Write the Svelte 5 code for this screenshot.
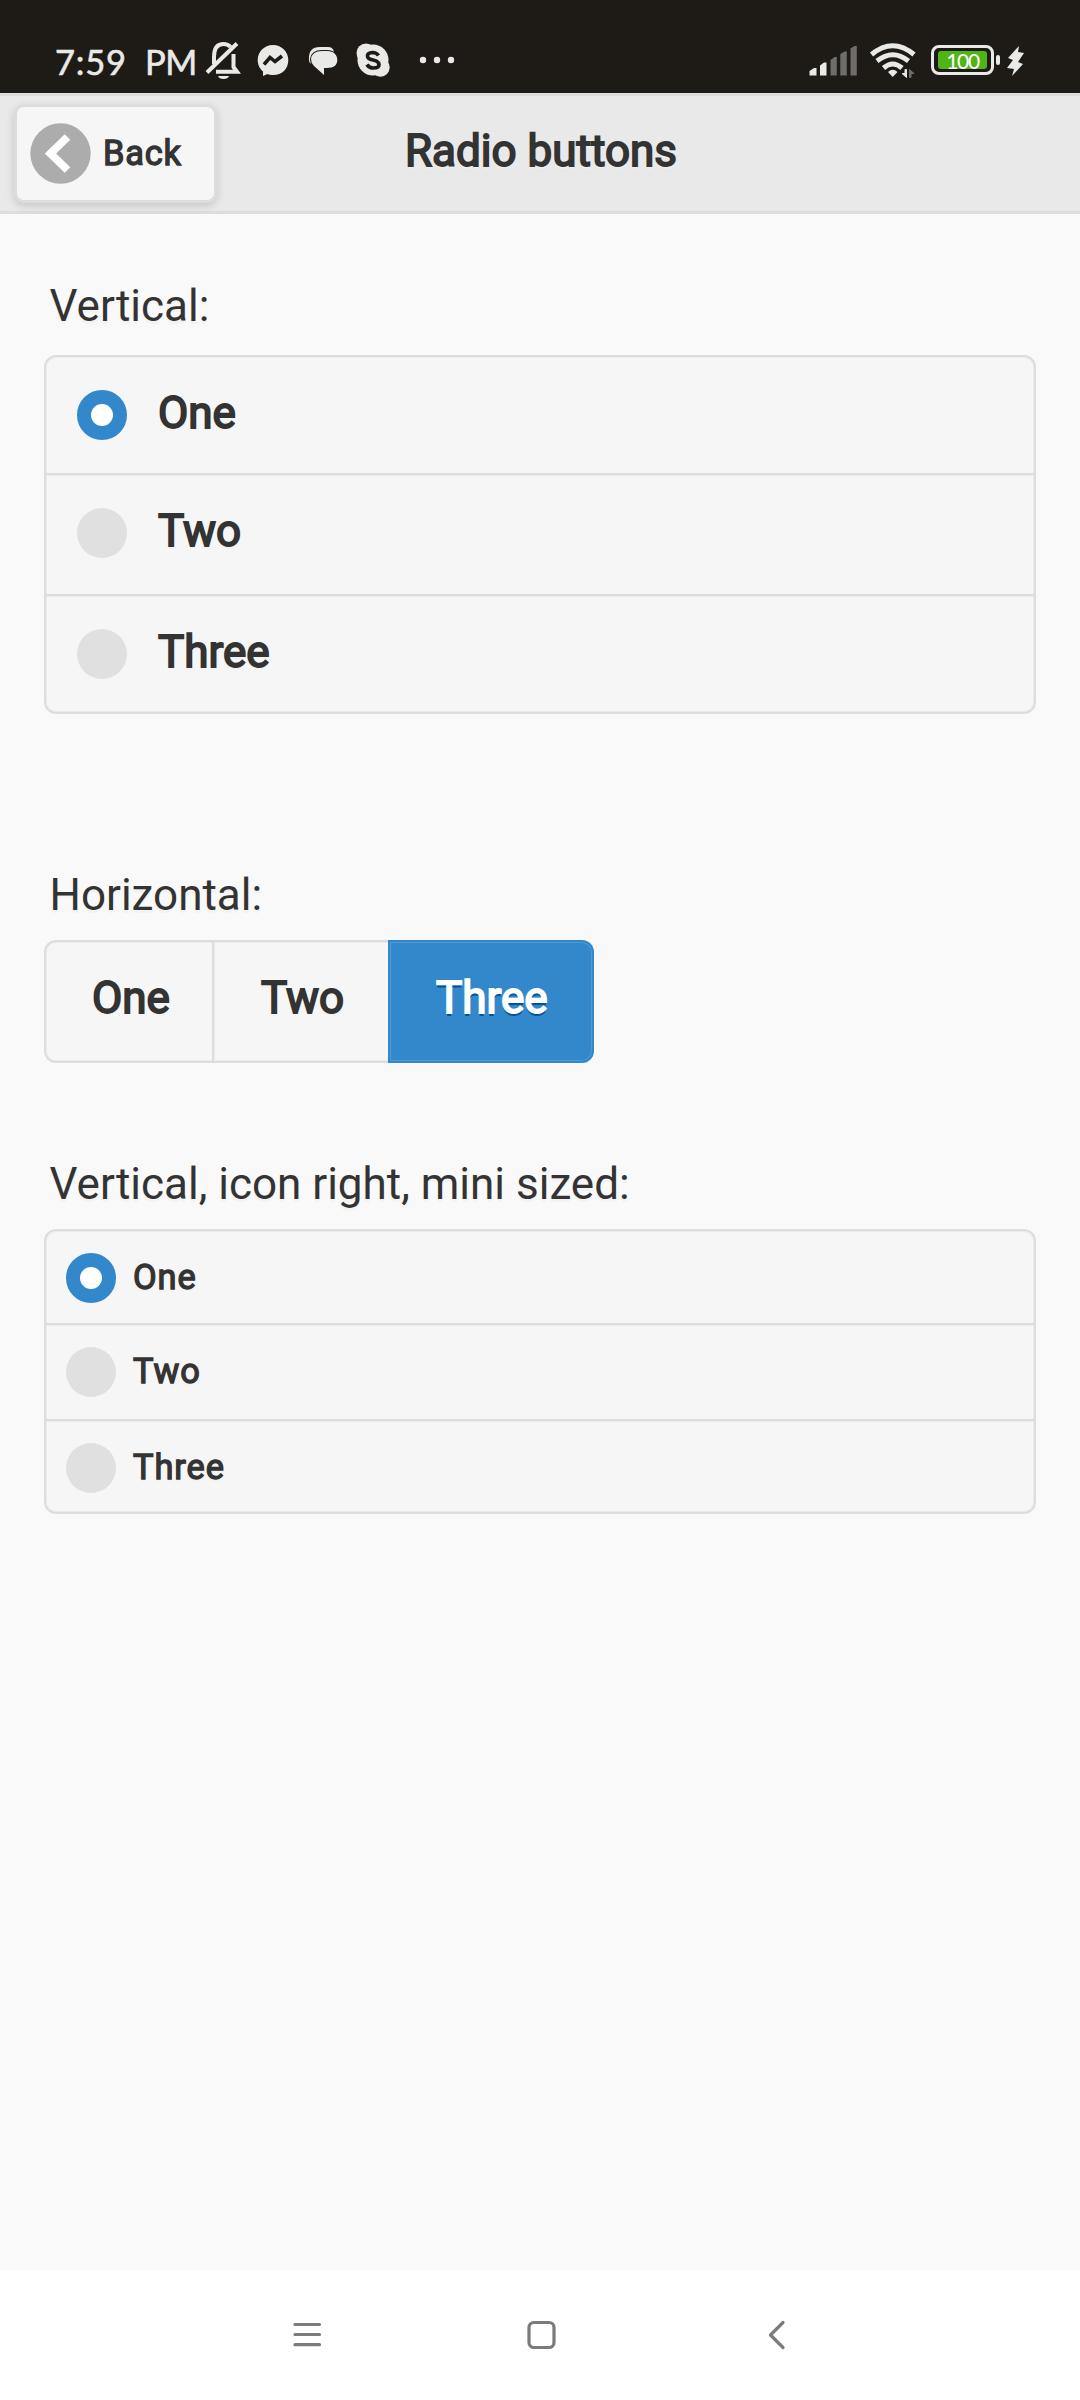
<script>
  const options = ['One', 'Two', 'Three'];
  let vertical = $state('One');
  let horizontal = $state('Three');
  let mini = $state('One');
</script>

<div class="screen">
  <div class="status">
    <div class="clock"><span class="time">7:59</span><span class="pm">PM</span></div>
    <svg class="left-icons" width="256" height="44" viewBox="204 38 256 44">
      <g fill="none" stroke="#e9e9e7" stroke-width="4">
        <path d="M214 64V57Q214 44 223.500 44Q228 44 230.500 47" />
        <path d="M207 72.500L237 43.500" />
        <path d="M216 71.700H237L233.500 67V54" />
      </g>
      <path d="M218 76H229Q228 79 223.500 79Q219 79 218 76Z" fill="#e9e9e7" />
      <path d="M273 45C282 45 288.300 52 288.300 60C288.300 69 282 75 273 75C271 75 269 74.600 267.500 74L263 76V71.500C260 69 257.700 65 257.700 60C257.700 52 264 45 273 45Z" fill="#e9e9e7" />
      <path d="M264 64.500L270 57.500L275 61.500L282 56" fill="none" stroke="#1e1b17" stroke-width="3.500" />
      <path d="M309 60Q308 47 320 47H328Q333 47 334 52L320 60L312 64Q309 63 309 60Z" fill="#e9e9e7" />
      <path d="M322 51H327C334 51 337.300 55 337.300 60C337.300 65 334 68 327 68H324V75L314 66Q311 63 311 59Q312 51 322 51Z" fill="#e9e9e7" stroke="#1e1b17" stroke-width="2" paint-order="stroke" />
      <g fill="#e9e9e7"><circle cx="373" cy="60" r="15.500" /><circle cx="366" cy="53" r="9.500" /><circle cx="380.500" cy="67.500" r="9.200" /></g>
      <path d="M378.500 55.500Q376.500 52.500 372.500 52.500Q367.500 52.700 367.500 56Q367.500 59 373 60Q379 61.300 379 64.500Q379 68 373.500 68Q369 68 367 64.500" fill="none" stroke="#1e1b17" stroke-width="3.700" />
      <g fill="#e9e9e7"><circle cx="423" cy="60" r="3.200" /><circle cx="437" cy="60" r="3.200" /><circle cx="451" cy="60" r="3.200" /></g>
    </svg>
    <div class="right-icons">
      <svg width="110" height="44" viewBox="806 38 110 44">
        <g fill="#e9e9e7">
          <path d="M809.500 71L814 68H816.500V75.500H809.500Z" /><path d="M820 65.500L824 62.500H826.500V75.500H820Z" />
        </g>
        <g fill="#6f6d69">
          <path d="M830.500 60L834.500 57H836.800V75.500H830.500Z" /><path d="M840.300 54L844.500 51.500H846.800V75.500H840.300Z" /><path d="M850.500 48.500L854.500 46H856.800V75.500H850.500Z" />
        </g>
        <g fill="none" stroke="#e9e9e7" stroke-width="5">
          <path d="M871.500 54.500Q892.700 37 914 54.500" /><path d="M877 61Q892.700 48.500 908.500 61" /><path d="M883.500 68Q892.700 60 902 68" />
        </g>
        <path d="M888 72Q892.700 67.500 897.500 72L892.700 77Z" fill="#e9e9e7" />
        <path d="M906.500 69.500V77.500L902 73.500H905V69.500Z" fill="#e9e9e7" stroke="#e9e9e7" />
        <path d="M909.500 77.500V69.500L914 73.500H911V77.500Z" fill="#6f6d69" stroke="#6f6d69" />
      </svg>
      <div class="battery"><span>100</span></div>
      <i class="nub"></i>
      <svg class="bolt" width="20" height="32" viewBox="0 0 20 32"><path d="M13 1L2 13L7 15L1 23L8 24L6 31L17 19L12 17L18 8L12 7Z" fill="#e9e9e7" /></svg>
    </div>
  </div>

  <header>
    <button class="back">
      <svg width="61" height="61" viewBox="0 0 61 61"><circle cx="30.500" cy="30.500" r="30.200" fill="#acacac" /><path d="M37.500 14L20.500 30.500L37.500 47" fill="none" stroke="#fff" stroke-width="8" /></svg>
      <span>Back</span>
    </button>
    <h1>Radio buttons</h1>
  </header>

  <main>
    <div class="legend first">Vertical:</div>
    <div class="group">
      {#each options as o}
        <label class="row"><input type="radio" bind:group={vertical} value={o} /><i class="dot" class:on={vertical === o}></i><span>{o}</span></label>
      {/each}
    </div>

    <div class="legend second">Horizontal:</div>
    <div class="segments">
      {#each options as o}
        <label class="segment" class:active={horizontal === o}><input type="radio" bind:group={horizontal} value={o} /><span>{o}</span></label>
      {/each}
    </div>

    <div class="legend third">Vertical, icon right, mini sized:</div>
    <div class="group mini">
      {#each options as o}
        <label class="row"><input type="radio" bind:group={mini} value={o} /><i class="dot" class:on={mini === o}></i><span>{o}</span></label>
      {/each}
    </div>
  </main>

  <nav>
    <svg width="36" height="36" viewBox="0 0 36 36"><path d="M6 8.500H30.500M6 18.500H30.500M6 28.700H30.500" /></svg>
    <svg width="36" height="36" viewBox="0 0 36 36"><rect x="5" y="6.500" width="25" height="25" rx="5" /></svg>
    <svg width="36" height="36" viewBox="0 0 36 36"><path d="M24 6.500L11.500 19L24 31.500" /></svg>
  </nav>
</div>

<style>
  :global(body) { margin: 0; background: #f9f9f9; }
  * { box-sizing: border-box; }
  .screen { width: 1080px; height: 2400px; display: flex; flex-direction: column; background: #f9f9f9; color: #333; font-family: Roboto, sans-serif; font-size: 44px; line-height: 58px; overflow: hidden; text-shadow: 0 3px 0 #f3f3f3; }
  svg { display: block; flex: none; }
  input { appearance: none; width: 0; height: 0; margin: 0; position: absolute; }

  .status { height: 93px; background: #1e1b17; color: #e9e9e7; display: flex; align-items: flex-start; padding: 38px 54px 0 55px; text-shadow: none; }
  .clock { width: 149px; display: flex; font: 34.5px/48px Lato, sans-serif; white-space: nowrap; letter-spacing: 0.8px; -webkit-text-stroke: 0.6px #e9e9e7; }
  .time { width: 90px; }
  .pm { letter-spacing: -0.5px; }
  .right-icons { margin-left: auto; display: flex; align-items: flex-start; }
  .battery { width: 63px; height: 30px; margin: 7px 2px 0 15px; border: 3px solid #e9e9e7; border-radius: 8px; padding: 3px 4px; }
  .battery span { display: block; height: 18px; border-radius: 3px; background: #50b414; color: #fff; font: 21px/20px Lato, sans-serif; letter-spacing: -1.4px; text-align: center; }
  .nub { width: 4px; height: 10px; margin: 17px 6px 0 0; background: #e9e9e7; border-radius: 2px; }
  .bolt { margin-top: 7px; }

  header { height: 121px; border: solid #ddd; border-width: 3px 0; background: #e9e9e9; display: grid; grid-template-columns: 220px 1fr 220px; padding: 8px 0 0; text-shadow: 0 3px 0 #eee; }
  .back { width: 203px; height: 99px; margin-left: 14px; border: 3px solid #ddd; border-radius: 10px; background: #f6f6f6; box-shadow: 0 3px 8px rgba(0, 0, 0, 0.15); display: flex; align-items: center; padding: 0 0 0 13px; font: 34.4px/44px Roboto, sans-serif; color: #333; text-shadow: 0 3px 0 #f3f3f3; }
  .back span { margin: -2px 0 0 12px; -webkit-text-stroke: 1.3px #333; letter-spacing: 0.8px; }
  h1 { margin: 18px 0 0 2px; font-size: 44px; line-height: 58px; font-weight: 400; text-align: center; -webkit-text-stroke: 1.8px #333; }

  main { flex: 1; padding: 0 44px; }
  .legend { padding-left: 5.5px; height: 58px; white-space: nowrap; }
  .first { margin-top: 63px; }
  .second { margin-top: 152px; }
  .third { margin-top: 92px; }
  .group { margin-top: 20px; width: 992px; height: 359px; display: grid; grid-template-rows: 116px 121px 118px; border-radius: 12px; border: 2px solid #ddd; background: #f6f6f6; box-shadow: inset 0 0 0 1px #ebebeb; }
  .row { display: flex; align-items: flex-start; padding: 33px 0 0 31px; border-top: 2px solid #ddd; }
  .row:first-child { border-top: 0; }
  .row + .row { box-shadow: inset 0 1px 0 #ebebeb; }
  .row span { margin: -6px 0 0 31px; -webkit-text-stroke: 1.8px #333; }
  .dot { width: 50px; height: 50px; border-radius: 50%; background: #e0e0e0; flex: none; }
  .dot.on { background: #fff; border: 14px solid #38c; }

  .segments { margin-top: 16px; display: flex; width: 550px; height: 123px; }
  .segment { border: 2px solid #ddd; border-right: 0; background: #f6f6f6; padding: 27px 0 0 46px; box-shadow: inset 0 1px 0 #ebebeb, inset 0 -1px 0 #ebebeb, inset 1px 0 0 #ebebeb; }
  .segment span { -webkit-text-stroke: 1.8px #333; }
  .segment:nth-child(1) { width: 168px; border-radius: 12px 0 0 12px; }
  .segment:nth-child(2) { width: 176px; padding-left: 47px; }
  .segment:nth-child(3) { width: 206px; border-radius: 0 12px 12px 0; }
  .segment.active { background: #38c; border: 2px solid #38c; color: #fff; text-shadow: 0 3px 0 #059; box-shadow: inset 0 0 0 1px #5299d2; }
  .segment.active span { -webkit-text-stroke-color: #fff; }

  .mini { margin-top: 16px; height: 285px; grid-template-rows: 92px 96px 93px; font-size: 34.4px; line-height: 44px; }
  .mini .row { padding: 22px 0 0 20px; }
  .mini .row span { margin: 2px 0 0 17px; -webkit-text-stroke: 1.3px #333; letter-spacing: 0.9px; }

  nav { height: 130px; background: #fff; display: flex; justify-content: center; gap: 199px; padding: 46px 0 0 3px; }
  nav svg { fill: none; stroke: #7b7b7b; stroke-width: 3.2; stroke-linecap: round; stroke-linejoin: round; }
</style>
